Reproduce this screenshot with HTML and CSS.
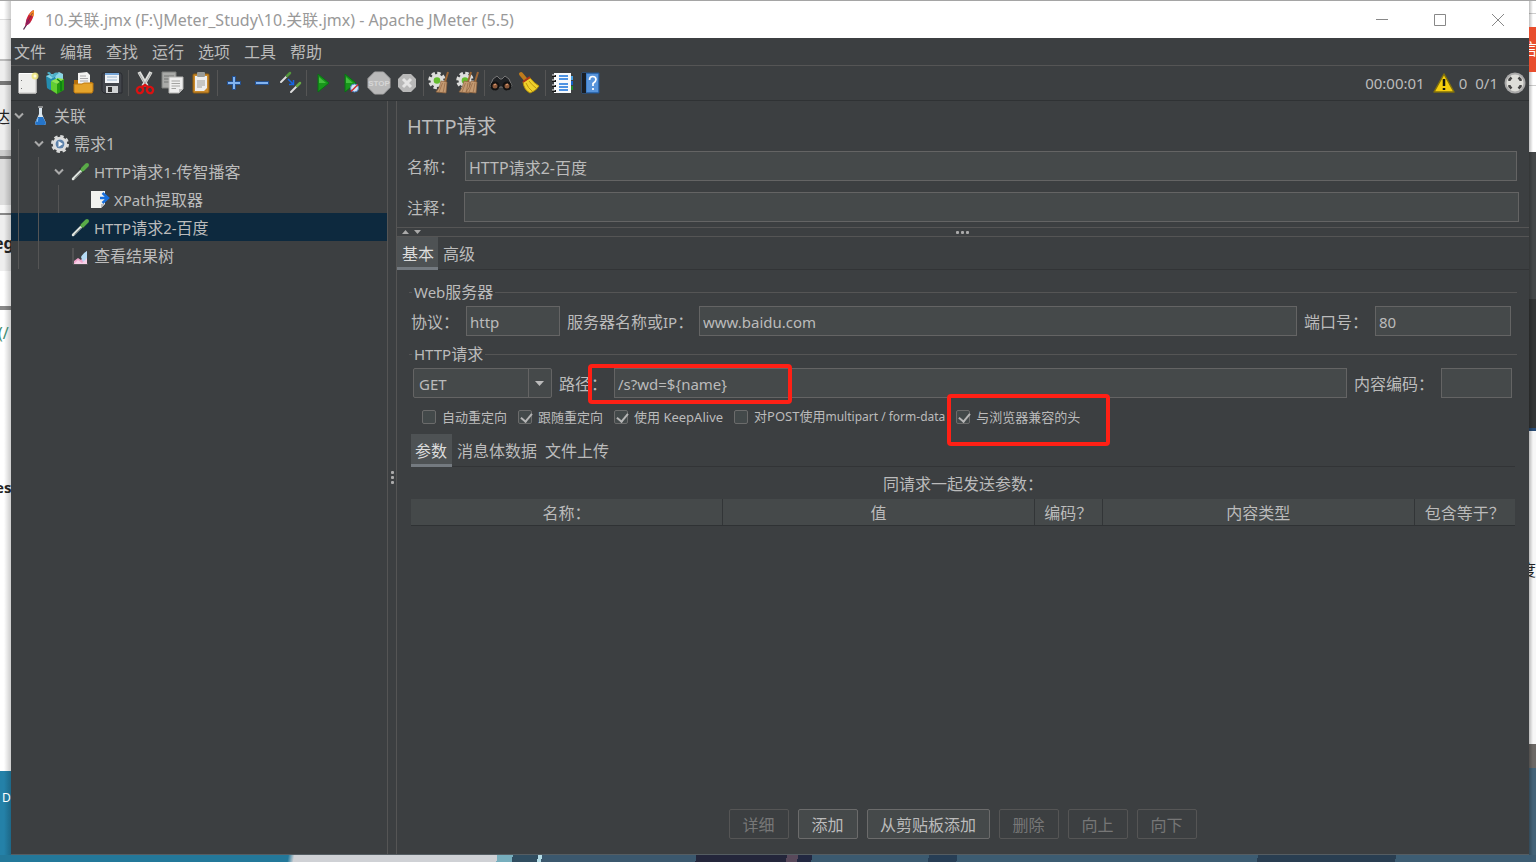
FILE: index.html
```html
<!DOCTYPE html>
<html lang="zh-CN">
<head>
<meta charset="utf-8">
<title>10.关联.jmx - Apache JMeter (5.5)</title>
<link rel="stylesheet" href="styles.css">
</head>
<body>
<div class="desktop">
  <div class="edge edge-top"></div>
  <div class="edge edge-left" aria-hidden="true">
    <span class="frag frag-a">达</span>
    <span class="frag frag-b">eg</span>
    <span class="frag frag-c">(/</span>
    <span class="frag frag-d">es</span>
    <span class="frag frag-e">D</span>
  </div>
  <main class="window">
    <header class="titlebar">
      <svg class="feather" width="14" height="22" viewBox="0 0 14 22"><path d="M1.500 20.500L5 15" stroke="#54284f" stroke-width="1.300"/><path d="M3.500 17C3.500 11 6 4 11.500 1C13 5 10 14 5 16Z" fill="#c92037"/><path d="M7 6C8.500 3.500 10 2 11.500 1C12.500 3 12 5.500 11.300 7.500Z" fill="#f08a24"/><path d="M3.500 17C3.600 14 4.300 11.500 5.200 9.500L8.500 13Q7 15.500 5 16Z" fill="#9e2064"/><path d="M4.500 15L10.500 4" stroke="#6e2144" stroke-width=".7"/></svg>
      <h1 class="title">10.关联.jmx (F:\JMeter_Study\10.关联.jmx) - Apache JMeter (5.5)</h1>
      <div class="controls">
        <button aria-label="最小化"><svg width="14" height="14" viewBox="0 0 14 14"><path d="M1 6.500H13" /></svg></button>
        <button aria-label="最大化"><svg width="14" height="14" viewBox="0 0 14 14"><path d="M1.500 1.500H12.500V12.500H1.500Z"/></svg></button>
        <button aria-label="关闭"><svg width="14" height="14" viewBox="0 0 14 14"><path d="M1 1L13 13M13 1L1 13"/></svg></button>
      </div>
    </header>
    <nav class="menubar">
      <button>文件</button><button>编辑</button><button>查找</button><button>运行</button><button>选项</button><button>工具</button><button>帮助</button>
    </nav>
    <div class="toolbar">
      <button aria-label="新建"><svg viewBox="0 0 24 24"><path d="M3 2.500H20V22H3Z" fill="#eeeeec" stroke="#fff"/><path d="M3 22H20V3" fill="none" stroke="#bcbcb8"/><path d="M5.500 9v1M5.500 17v1" stroke="#777"/><circle cx="19" cy="5" r="3.500" fill="#efe67c" opacity=".85"/><circle cx="19" cy="5" r="1.500" fill="#fffde0"/></svg></button>
      <button aria-label="模板"><svg viewBox="0 0 24 24"><path d="M2 5L8 3L12 5V17L6 19L3 17Z" fill="#248cae"/><path d="M2 5L7 8L12 5L8 3ZM10 4L15 1L19 3V8L13 10Z" fill="#8bd5e5"/><path d="M3 2Q6-1 8 5Q10 0 15 2L9 7Z" fill="#4db0c8"/><path d="M7 10L13 13V23L7 19Z" fill="#62cf31"/><path d="M13 13L20 8V19L13 23Z" fill="#249b11"/><path d="M7 10L14 7L20 8L13 13Z" fill="#8ee64d"/><path d="M13 8L17 11V20" stroke="#087e15" stroke-width="1.500" fill="none"/></svg></button>
      <button aria-label="打开"><svg viewBox="0 0 24 24"><path d="M2 9H10L12 11H20V21H2Z" fill="#b66f0c"/><path d="M6 2L15 1L18 4V15H6Z" fill="#f4f4f2"/><path d="M8 5H14M8 7.500H16M8 10H16" stroke="#aaa"/><path d="M2 13H10L12 12H21V20L20 22H3L2 21Z" fill="#e5a42b" stroke="#bd780e"/></svg></button>
      <button aria-label="保存"><svg viewBox="0 0 24 24"><path d="M2 3Q2 2 3 2H21L22 4V22H4L2 20Z" fill="#42454b" stroke="#292b30"/><path d="M5 2H19V12H5Z" fill="#f1f4f7"/><path d="M5 2H19V4H5Z" fill="#76a6d8"/><path d="M7 6H17M7 9H17" stroke="#9ab4ce"/><path d="M6 15H18V22H6Z" fill="#d1d3d4"/><path d="M8 16H12V21H8Z" fill="#333"/></svg></button>
      <i class="sep"></i>
      <button aria-label="剪切"><svg viewBox="0 0 24 24"><path d="M6 1L14 15M18 1L10 15" stroke="#dedfdc" stroke-width="3.500"/><path d="M6 2L14 16M18 2L10 16" stroke="#929797" stroke-width=".7"/><g fill="none" stroke="#db1111" stroke-width="2.300"><ellipse cx="7" cy="19" rx="3" ry="3.300" transform="rotate(35 7 19)"/><ellipse cx="17" cy="19" rx="3" ry="3.300" transform="rotate(-35 17 19)"/><path d="M9 16L12 14L15 16"/></g></svg></button>
      <button aria-label="复制"><svg viewBox="0 0 24 24"><path d="M1 1H15V17H1Z" fill="#a9aaa8" stroke="#7e807e"/><path d="M3 5H13M3 8H13M3 11H13" stroke="#747674"/><path d="M8 6H22V18L18 22H8Z" fill="#eee" stroke="#b6b6b4"/><path d="M10.500 10H19M10.500 12.500H19M10.500 15H19M10.500 17.500H15" stroke="#a4a4a2"/><path d="M18 22V18H22Z" fill="#bbb"/></svg></button>
      <button aria-label="粘贴"><svg viewBox="0 0 24 24"><rect x="4" y="3" width="16" height="19" rx="1" fill="#c98a2c" stroke="#925f11"/><path d="M6 5H18V17L15 20H6Z" fill="#eee"/><rect x="8" y="1" width="8" height="5" rx="1" fill="#9a9c98"/><path d="M8 10H16M8 12H16M8 14H16M8 16H13" stroke="#9d9d98"/></svg></button>
      <i class="sep"></i>
      <button aria-label="展开"><svg viewBox="0 0 24 24"><path d="M12 5V19M5 12H19" stroke="#24508e" stroke-width="4"/><path d="M12 6V18M6 12H18" stroke="#82b4f0" stroke-width="2"/></svg></button>
      <button aria-label="折叠"><svg viewBox="0 0 24 24"><path d="M5 12H19" stroke="#24508e" stroke-width="4"/><path d="M6 12H18" stroke="#82b4f0" stroke-width="2"/></svg></button>
      <button aria-label="切换"><svg viewBox="0 0 24 24"><g stroke-linecap="round"><path d="M3 11L9 5" stroke="#ddd" stroke-width="2"/><path d="M9 5L12 2" stroke="#54973d" stroke-width="2.500"/><path d="M13 21L19 15" stroke="#ddd" stroke-width="2"/><path d="M19 15L22 12" stroke="#68aa46" stroke-width="2.500"/></g><path d="M10 8L15 13M15.500 9V13.500H11" fill="none" stroke="#1766e4" stroke-width="1.500"/></svg></button>
      <i class="sep"></i>
      <button aria-label="启动"><svg viewBox="0 0 24 24"><path d="M7 3L18 12L7 21Z" fill="#18961b" stroke="#087115"/><path d="M8 6L15 12H8Z" fill="#43be3e"/></svg></button>
      <button aria-label="不停顿启动"><svg viewBox="0 0 24 24"><path d="M6 3L17 12L6 21Z" fill="#18961b" stroke="#087115"/><path d="M7 6L14 12H7Z" fill="#43be3e"/><circle cx="15.500" cy="17" r="4" fill="#d5e5f5" stroke="#4c83c3"/><path d="M12 20.500L19 13.500" stroke="#cf2929" stroke-width="1.500"/></svg></button>
      <button aria-label="停止" disabled><svg viewBox="0 0 24 24"><path d="M7.500 1H16.500L23 7.500V16.500L16.500 23H7.500L1 16.500V7.500Z" fill="#b9b9b9" stroke="#aaa"/><text x="12" y="15" text-anchor="middle" class="stop-word">STOP</text></svg></button>
      <button aria-label="关闭" disabled><svg viewBox="0 0 24 24"><path d="M8 3H16L21 8V16L16 21H8L3 16V8Z" fill="#b8b8b8"/><path d="M8 8L16 16M16 8L8 16" stroke="#e4e4e4" stroke-width="3"/></svg></button>
      <i class="sep"></i>
      <button aria-label="清除"><svg viewBox="0 0 24 24"><use href="#gear"/><use href="#brush"/></svg></button>
      <button aria-label="清除全部"><svg viewBox="0 0 24 24"><use href="#gear"/><use href="#brush" x="-5"/><use href="#brush" x="2"/></svg></button>
      <i class="sep"></i>
      <button aria-label="查找"><svg viewBox="0 0 24 24"><path d="M4 8L8 5L11 8H13L16 5L20 8L23 15L19 19L13 16H11L5 19L1 15Z" fill="#202225" stroke="#777"/><circle cx="6" cy="15" r="3.500" fill="#8b593b" stroke="#111" stroke-width="2"/><circle cx="18" cy="15" r="3.500" fill="#8b593b" stroke="#111" stroke-width="2"/><path d="M5 14L7 13M17 14L19 13" stroke="#eda77c"/></svg></button>
      <button aria-label="重置查找"><svg viewBox="0 0 24 24"><path d="M4 3L9 9" stroke="#bf7b1c" stroke-width="4" stroke-linecap="round"/><path d="M6 11L13 7Q17 12 22 15Q19 20 13 22Q7 19 6 11Z" fill="#efd12c" stroke="#b69108"/><path d="M6 11L13 6" stroke="#b03519" stroke-width="2"/><path d="M9 12Q11 17 15 20M12 10Q15 14 19 17" fill="none" stroke="#bd950d"/></svg></button>
      <i class="sep"></i>
      <button aria-label="函数助手"><svg viewBox="0 0 24 24"><path d="M19 5H23V9H19Z" fill="#48a1e3"/><path d="M19 10H23V14H19Z" fill="#1663c8"/><path d="M19 15H23V19H19Z" fill="#238b2d"/><path d="M4 2H21V22H4Z" fill="#f7f9fb"/><path d="M9 5H18M9 8H18M9 13H18M9 16H18M9 19H18" stroke="#1670dc" stroke-width="1.300"/><path d="M2 5H6M2 10H6M2 15H6M2 20H6" stroke="#151515" stroke-width="2"/><path d="M2 4H5M2 9H5M2 14H5M2 19H5" stroke="#eee"/></svg></button>
      <button aria-label="帮助"><svg viewBox="0 0 24 24"><path d="M4 2H21V22H4Z" fill="#3d7fcb" stroke="#235694"/><path d="M4 2H8V22H4Z" fill="#191e25"/><path d="M9 3H20V21H9Z" fill="#5794db"/><path d="M11.500 9Q11.500 5.500 14.500 5.500Q18 5.500 18 8.500Q18 10.500 15 12.500V15M15 17V19" fill="none" stroke="#fff" stroke-width="1.700"/></svg></button>
      <div class="status">
        <span class="clock">00:00:01</span>
        <svg width="22" height="22" viewBox="0 0 22 22"><path d="M11 2L21 20H1Z" fill="#f6ce0c" stroke="#80700c" stroke-width="1.500" stroke-linejoin="round"/><path d="M11 7V14M11 16V18" stroke="#17170d" stroke-width="2.500"/></svg>
        <span>0</span><span class="threads">0/1</span>
        <svg width="22" height="22" viewBox="0 0 22 22"><circle cx="11" cy="11" r="10.500" fill="#a9a9a9"/><circle cx="11" cy="11" r="8.500" fill="#deded9"/><path d="M7.500 5.500L5.500 7.500V9M14.500 5.500L16.500 7.500V9M7.500 16.500L5.500 14.500V13M14.500 16.500L16.500 14.500V13" fill="none" stroke="#454545" stroke-width="2.500"/></svg>
      </div>
    </div>
    <div class="workspace">
      <ul class="tree">
        <li class="node"><span class="twisty"><svg viewBox="0 0 10 8"><path d="M1 1.500L5 5.500L9 1.500"/></svg></span><svg class="ico" viewBox="0 0 20 20"><path d="M8 2H11V8L15 17Q15 19 13 19H6Q4 19 4 17L8 8Z" fill="#dce7ef"/><path d="M7 11H12L15 17Q15 19 13 19H6Q4 19 4 17Z" fill="#2675c9"/><path d="M7 1H12" stroke="#ddd"/><path d="M7 12L6 16" stroke="#95caf6"/></svg><span>关联</span></li>
        <li class="node l1"><span class="twisty"><svg viewBox="0 0 10 8"><path d="M1 1.500L5 5.500L9 1.500"/></svg></span><svg class="ico" viewBox="0 0 20 20"><circle cx="9" cy="10" r="7.500" fill="none" stroke="#d7d9d8" stroke-width="3" stroke-dasharray="3.300 2.590"/><circle cx="9" cy="10" r="6" fill="#fff" stroke="#ddd" stroke-width="2.500"/><circle cx="9" cy="10" r="4.500" fill="#5f83ab"/><path d="M7.500 7L12 10L7.500 13Z" fill="#f5f8fb"/></svg><span>需求1</span></li>
        <li class="node l2"><span class="twisty"><svg viewBox="0 0 10 8"><path d="M1 1.500L5 5.500L9 1.500"/></svg></span><svg class="ico" viewBox="0 0 20 20"><use href="#dropper"/></svg><span><span class="latin">HTTP</span>请求<span class="latin">1-</span>传智播客</span></li>
        <li class="node l3"><span class="twisty"></span><svg class="ico" viewBox="0 0 20 20"><path d="M0 1H14V14L10 18H0Z" fill="#f1f2ef"/><path d="M10 18V14H14Z" fill="#bbb"/><path d="M9 8H16M11.500 3L17 8L11.500 13" fill="none" stroke="#176edb" stroke-width="2.500"/></svg><span><span class="latin">XPath</span>提取器</span></li>
        <li class="node l2 selected"><span class="twisty"></span><svg class="ico" viewBox="0 0 20 20"><use href="#dropper"/></svg><span><span class="latin">HTTP</span>请求<span class="latin">2-</span>百度</span></li>
        <li class="node l2"><span class="twisty"></span><svg class="ico" viewBox="0 0 20 20"><path d="M2 2V18H17" fill="none" stroke="#666"/><path d="M3 18V15L7 12L10 14L16 5V18Z" fill="#f0a5cc"/><path d="M10 11Q12 7 16 5V14L12 16Z" fill="#b5dbf5"/><path d="M3 18L7 14L11 17L16 12V18Z" fill="#f7d1e8"/></svg><span>查看结果树</span></li>
      </ul>
      <div class="divider"><i></i><i></i><i></i></div>
      <section class="editor">
        <div class="head">
          <h2><span>HTTP请求</span></h2>
          <div class="field"><label for="name">名称：</label><input id="name" value="HTTP请求2-百度"></div>
          <div class="field comment"><label for="comment">注释：</label><input id="comment"></div>
        </div>
        <div class="hsplit"><svg width="24" height="7" viewBox="0 0 24 7"><path d="M1 5L4.500 1L8 5ZM13 1H20L16.500 5Z" fill="#aaa"/></svg><span class="grip"><i></i><i></i><i></i></span></div>
        <div class="tabs"><button class="active">基本</button><button>高级</button></div>
        <div class="config">
          <fieldset>
            <legend><span class="latin">Web</span>服务器</legend>
            <div class="line">
              <label class="w55" for="proto">协议：</label><input class="proto num" id="proto" value="http">
              <label class="w132" for="host">服务器名称或<span class="latin">IP</span>：</label><input class="grow num" id="host" value="www.baidu.com">
              <label class="w71" for="port">端口号：</label><input class="port num" id="port" value="80">
            </div>
          </fieldset>
          <fieldset>
            <legend><span class="latin">HTTP</span>请求</legend>
            <div class="line">
              <div class="combo"><select class="num" aria-label="方法"><option>GET</option><option>POST</option></select><svg width="9" height="6" viewBox="0 0 9 6"><path d="M0 0H9L4.500 5Z" fill="#bbb"/></svg></div>
              <label class="w55" for="path">路径：</label>
              <div class="path grow"><input class="num" id="path" value="/s?wd=${name}"><span class="mark mark-path"></span></div>
              <label class="w87" for="enc">内容编码：</label><input class="enc" id="enc">
            </div>
            <div class="checks">
              <label><input type="checkbox">自动重定向</label>
              <label><input type="checkbox" checked>跟随重定向</label>
              <label><input type="checkbox" checked>使用 KeepAlive</label>
              <label><input type="checkbox"><span>对POST使用<span class="small">multipart / form-data</span></span></label>
              <label><input type="checkbox" checked>与浏览器兼容的头<span class="mark mark-head"></span></label>
            </div>
          </fieldset>
          <div class="body">
            <div class="tabs inner"><button class="active">参数</button><button>消息体数据</button><button>文件上传</button></div>
            <table>
              <caption>同请求一起发送参数：</caption>
              <colgroup><col><col><col class="c-enc"><col><col class="c-eq"></colgroup>
              <thead><tr><th>名称：</th><th>值</th><th>编码？</th><th>内容类型</th><th>包含等于？</th></tr></thead>
            </table>
          </div>
          <div class="actions">
            <button disabled>详细</button><button>添加</button><button>从剪贴板添加</button><button disabled>删除</button><button disabled>向上</button><button disabled>向下</button>
          </div>
        </div>
      </section>
    </div>
  </main>
  <div class="edge edge-right" aria-hidden="true"><span class="badge">信</span><span class="frag frag-f">度</span></div>
  <div class="edge edge-bottom"></div>
</div>
<svg class="defs" width="0" height="0" aria-hidden="true">
  <defs>
    <g id="gear"><circle cx="9" cy="9.500" r="7" fill="none" stroke="#dededc" stroke-width="3.500" stroke-dasharray="3.300 2.200"/><circle cx="9" cy="9.500" r="6.500" fill="#dededc"/><circle cx="9" cy="9.500" r="3.300" fill="#65bd2e"/></g>
    <g id="brush"><path d="M20 1L17 11" stroke="#9d6736" stroke-width="2"/><path d="M13 10L19 11L18 22L8 21Q12 17 13 10Z" fill="#c49a72" stroke="#8d623c" stroke-width=".7"/><path d="M14.500 12L11 21M17 12L15 22" stroke="#9b704a" stroke-width=".8"/></g>
    <g id="dropper"><path d="M2 17L10 9" stroke="#dfe4e0" stroke-width="2.500" stroke-linecap="round"/><path d="M3.500 16.500L10 10" stroke="#8c948e" stroke-width="1"/><path d="M9 6L13 10" stroke="#25362a" stroke-width="2"/><path d="M11.500 7.500L16 3" stroke="#5aab48" stroke-width="4" stroke-linecap="round"/></g>
  </defs>
</svg>
</body>
</html>
```

FILE: styles.css
```css
* { box-sizing: border-box; }
body {
  margin: 0;
  font: 16px/20px "Noto Sans", "Noto Sans CJK SC", sans-serif;
  color: #bbb;
}
button, input, select { font: inherit; color: inherit; margin: 0; }
button { background: none; border: 0; padding: 0; }
h1, h2, ul { margin: 0; padding: 0; font-weight: 400; }
.latin, .num { font-size: 15px; }
.small { font-size: 12px; }
.defs { position: absolute; }

/* Desktop behind the window */
.desktop {
  display: grid;
  grid-template: 1px minmax(0, 1fr) 7px / 11px minmax(0, 1fr) 7px;
  height: 100vh;
  overflow: hidden;
}
.edge { position: relative; overflow: hidden; }
.edge-top, .edge-bottom { grid-column: 1 / -1; }
.edge-top { background: #a5a5a5; }
.edge-left {
  background:
    linear-gradient(90deg, transparent 4px, rgba(0, 0, 0, .2)),
    linear-gradient(#fff 18px, #ddd 18px 19px, #f8f8f8 19px 58px, #bbb 58px 60px, #eee 60px 80px, #777 80px 84px, #eee 84px 149px, #ccc 149px 155px, #777 155px 158px, #ddd 158px 204px, #f7f7f7 204px 212px, #888 212px 214px, #eee 214px 270px, #fff 270px 305px, #888 305px 309px, #fff 309px 770px, #2481a8 770px);
}
.edge-right {
  background:
    linear-gradient(90deg, rgba(0, 0, 0, .25), transparent 4px),
    linear-gradient(#fff 12px, #ccc 12px 13px, #fff 13px 84px, #ccc 84px 85px, #fff 85px 151px, #454849 151px 298px, #343636 298px 427px, #294c75 427px 430px, #f7f7f7 430px 743px, #6b6865 743px 767px, #426277 767px);
}
.edge-bottom {
  background: linear-gradient(100deg, #23789a 284px, #cfd1d5 290px 490px, #77aebd 490px 505px, #304d60 505px 530px, #b4dce6 530px 534px, #3b586e 534px 686px, #24263b 686px 775px, #59495b 775px 786px, #222841 786px 800px, #3b5a70 800px 915px, #273e55 915px 943px, #3c5c72 943px 1239px, #293e51 1239px 1375px, #3d5d73 1375px);
}
.frag { position: absolute; color: #222; white-space: nowrap; }
.frag-a { left: -6px; top: 106px; }
.frag-b { left: -6px; top: 232px; font-weight: 700; }
.frag-c { left: -2px; top: 322px; color: #3c8c71; }
.frag-d { left: -5px; top: 476px; font-weight: 700; font-size: 15px; }
.frag-e { left: 2px; top: 787px; font-size: 12px; color: #fff; }
.frag-f { left: -9px; top: 559px; }
.badge {
  position: absolute; left: 0; top: 26px; width: 8px; height: 45px;
  background: #e84d2d; color: #fff; line-height: 45px; text-indent: -8px;
}

/* Window frame */
.window { display: flex; flex-direction: column; min-width: 0; background: #3c3f41; border-bottom: 1px solid #555d62; }
.titlebar { display: flex; align-items: center; height: 37px; padding-left: 11px; background: #fff; color: #999; }
.title { margin-left: 9px; font-size: 16px; }
.controls { display: flex; gap: 44px; margin-left: auto; padding-right: 24px; }
.controls button { width: 14px; height: 14px; }
.controls svg { display: block; fill: none; stroke: #888; }
.menubar { display: flex; gap: 14px; height: 28px; padding-left: 3px; border-bottom: 1px solid #555; }
.toolbar { display: flex; align-items: center; height: 35px; padding: 0 3px; border-bottom: 1px solid #2f3234; }
.toolbar button { display: grid; place-items: center; width: 28px; height: 28px; }
.toolbar button svg { width: 24px; height: 24px; }
.stop-word { font: 700 8px "Liberation Sans", sans-serif; fill: #d6d6d6; }
.sep { width: 1px; height: 26px; margin: 0 2px; background: #555; }
.status { display: flex; align-items: center; margin-left: auto; font-size: 15px; }
.clock { margin-right: 8px; }
.status span + span { margin-left: 8px; }
.status svg + span { margin-left: 4px; }
.threads { margin-right: 6px; }

/* Test plan tree */
.workspace { display: flex; flex: 1; min-height: 0; }
.tree { width: 377px; list-style: none; border-right: 1px solid #555; }
.node { display: flex; align-items: center; height: 28px; padding-top: 2px; white-space: nowrap; }
.twisty { display: grid; place-items: center; width: 15px; margin-right: 5px; }
.twisty svg { width: 10px; height: 8px; fill: none; stroke: #aaa; stroke-width: 2; }
.ico { width: 20px; height: 20px; margin-right: 3px; }
.l1, .l2, .l3 { background: linear-gradient(#555, #555) 7px 0 / 1px 100% no-repeat; }
.l1 { padding-left: 20px; }
.l2, .l3 { background-image: linear-gradient(#555, #555), linear-gradient(#555, #555); background-position: 7px 0, 27px 0; }
.l2 { padding-left: 40px; }
.l3 {
  padding-left: 60px;
  background-image: linear-gradient(#555, #555), linear-gradient(#555, #555), linear-gradient(#555, #555);
  background-position: 7px 0, 27px 0, 47px 0;
}
.selected { background-color: #0d293e; }
.divider { display: flex; flex-direction: column; align-items: center; justify-content: center; gap: 2px; width: 9px; border-right: 1px solid #555; }
.divider i, .grip i { width: 3px; height: 3px; border-radius: 1px; background: #aaa; }

/* Sampler editor */
.editor { display: flex; flex-direction: column; flex: 1; min-width: 0; }
.head { padding: 14px 10px 5px; }
h2 { margin-bottom: 12px; font-size: 20px; line-height: 24px; }
input, select {
  min-width: 0; height: 30px; padding: 1px 3px 0;
  background: #45494a; border: 1px solid #646464; border-radius: 0; outline: 0;
}
.field { display: grid; grid-template-columns: 58px 1fr; align-items: center; margin: 0 2px 11px 0; }
.field.comment { grid-template-columns: 57px 1fr; margin: 0; }
.field label, .line label { padding-top: 2px; }
.hsplit { display: grid; grid-template-columns: 1fr auto 1fr; align-items: center; height: 10px; padding: 0 6px 0 4px; border: solid #555; border-width: 1px 0; }
.grip { display: flex; gap: 2px; }
.tabs { display: flex; height: 33px; border-bottom: 1px solid #323436; }
.tabs button { height: 33px; padding: 1px 5px 0 4px; }
.tabs .active { padding: 4px 4px 0 5px; color: #ddd; background: #4e5254; border-bottom: 3px solid #747a80; margin-right: 1px; }
.config { display: flex; flex-direction: column; flex: 1; padding: 12px 12px 15px; }
fieldset { min-width: 0; margin: 0; padding: 0; border: 0; }
legend { display: flex; align-items: center; width: 100%; height: 20px; padding: 0; gap: 2px; }
legend::before { content: ""; width: 3px; height: 1px; background: #555; }
legend::after { content: ""; flex: 1; height: 1px; background: #555; }
legend .latin { margin-right: -2px; }
.line { display: flex; align-items: center; gap: 7px; padding: 4px 6px 6px 2px; }
.line input { padding-top: 2px; }
fieldset + fieldset { margin-top: 2px; }
fieldset + fieldset .line { padding: 4px 5px 0 4px; }
.line label { flex: none; margin-right: -7px; white-space: nowrap; }
.w55 { width: 55px; }
.w132 { width: 132px; }
.w71 { width: 71px; }
.w87 { width: 87px; }
.proto { width: 94px; }
.port { width: 136px; }
.enc { width: 71px; }
.grow { flex: 1; }
.path { position: relative; }
.path input { display: block; width: 100%; }
.combo { position: relative; width: 139px; }
.combo select {
  display: block; width: 100%; appearance: none; border-radius: 2px; padding: 2px 0 0 5px;
  background: linear-gradient(#646464, #646464) right 22px top / 1px 100% no-repeat #45494a;
}
.combo svg { position: absolute; right: 8px; top: 13px; pointer-events: none; }
.checks { display: flex; align-items: center; gap: 11px; height: 36px; padding: 1px 0 0 13px; font-size: 13px; white-space: nowrap; }
.checks label { position: relative; display: flex; align-items: center; gap: 6px; }
input[type="checkbox"] { appearance: none; width: 14px; height: 14px; padding: 0; border-color: #6b6b6b; border-radius: 2px; background-color: #43494a; }
input[type="checkbox"]:checked::before {
  content: ""; display: block; width: 5px; height: 9px; margin: 0 0 0 4px;
  border: solid #b5b5b5; border-width: 0 2px 2px 0; transform: rotate(40deg);
}
.mark { position: absolute; border: 4px solid #ff2015; border-radius: 4px; pointer-events: none; }
.mark-path { left: -26px; top: -4px; width: 204px; height: 40px; }
.mark-head { left: -9px; top: -13px; width: 163px; height: 52px; }
.body { flex: 1; padding: 0 2px; }
.inner button { padding-right: 4px; padding-left: 4px; }
.inner .active { padding-left: 4px; padding-right: 5px; margin-right: 1px; }
table { width: 100%; border-collapse: collapse; table-layout: fixed; }
caption { height: 32px; padding-top: 7px; }
.c-enc { width: 68px; }
.c-eq { width: 101px; }
th { height: 26px; padding: 2px 0 0; font-weight: 400; background: #45494a; border-bottom: 1px solid #2f3234; }
th + th { border-left: 1px solid #323537; }
.actions { display: flex; justify-content: center; gap: 9px; }
.actions button { height: 30px; min-width: 60px; padding: 2px 13px 0 12px; border: 1px solid #6b6b6b; border-radius: 2px; background: #45494a; }
.actions button:disabled { color: #777; border-color: #555; background: none; }
```
